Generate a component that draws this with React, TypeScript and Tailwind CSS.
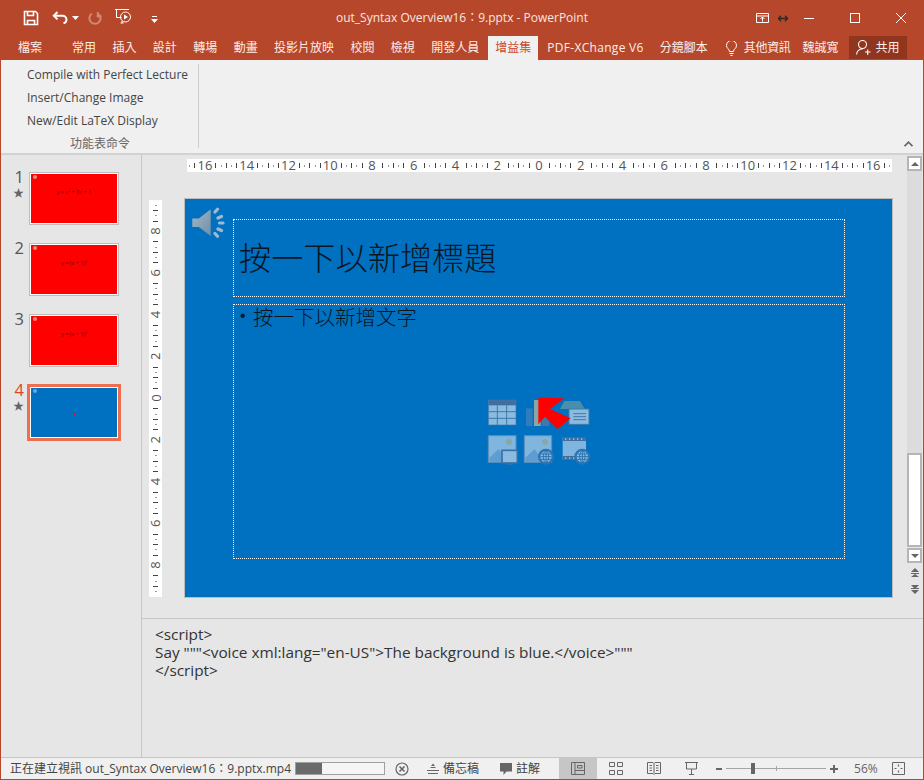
const ui = "font-['Open_Sans','Noto_Sans_CJK_TC',sans-serif]";

const tabs = ["常用", "插入", "設計", "轉場", "動畫", "投影片放映", "校閱", "檢視", "開發人員"];

function TitleIcons() {
  return (
    <div className="flex items-center">
      <svg width="16" height="16" viewBox="0 0 16 16" className="ml-[22px]" fill="none" stroke="#fff" strokeWidth="1.6">
        <path d="M1.5 1.5h11l2 2v11h-13z" />
        <path d="M4.5 1.5v4h6v-4M4.5 14.5v-4h7v4" />
      </svg>
      <svg width="17" height="14" viewBox="0 0 17 14" className="ml-[13px]" fill="none" stroke="#fff" strokeWidth="2">
        <path d="M5.5 1 1.8 4.7l3.7 3.7M2 4.7h8.5a4 4 0 0 1 4 4 4 4 0 0 1-3 3.6" />
      </svg>
      <svg width="7" height="4" viewBox="0 0 7 4" className="ml-[3px]"><path d="M0 0h7L3.5 4z" fill="#fff" /></svg>
      <svg width="15" height="15" viewBox="0 0 15 15" className="ml-[9px]" fill="none" stroke="#cf8a76" strokeWidth="2">
        <path d="M4.5 2.5a5.6 5.6 0 1 0 6 0M4.7 1v4.5H.8" transform="translate(14.5 0) scale(-1 1)" />
      </svg>
      <svg width="19" height="20" viewBox="0 0 19 20" className="ml-[11px]" fill="none" stroke="#fff" strokeWidth="1">
        <path d="M1 1.5h14M2.5 2v7.5h5M6.5 15h3M8 13v2" />
        <circle cx="11.5" cy="9" r="5" />
        <path d="m10 6.5 4 2.5-4 2.5z" fill="#fff" stroke="none" />
      </svg>
      <svg width="7" height="7" viewBox="0 0 7 7" className="ml-[18px] mt-[3px]" fill="#fff">
        <path d="M1 0h5v1H1zM0 3h7L3.500 7z" />
      </svg>
    </div>
  );
}

function WindowIcons() {
  return (
    <div className="flex items-center justify-end pr-[17px]">
      <svg width="13" height="10" viewBox="0 0 13 10" fill="none" stroke="#fff">
        <path d="M.5.500h12v9H.5zM.5 3h12M6.500 8.500V4M4.500 6l2-2 2 2" />
      </svg>
      <svg width="10" height="7" viewBox="0 0 10 7" className="ml-[9px]" fill="none" stroke="#33261f" strokeWidth="1.300">
        <path d="M0 3.500h10M3 .8.500 3.500 3 6.200M7 .8l2.500 2.700L7 6.200" />
      </svg>
      <div className="ml-[16px] h-px w-[10px] bg-white" />
      <div className="ml-[36px] h-[10px] w-[10px] border border-white" />
      <svg width="10" height="10" viewBox="0 0 10 10" className="ml-[36px]" stroke="#fff" fill="none">
        <path d="m0 0 10 10M10 0 0 10" />
      </svg>
    </div>
  );
}

function TabRow() {
  return (
    <div className="flex h-[24px] items-stretch text-[12px] leading-[24px] text-[#fbeee9]">
      <span className="ml-[17px] mr-[30px]">檔案</span>
      <div className="flex gap-[16.400px]">
        {tabs.map((t) => (
          <span key={t}>{t}</span>
        ))}
      </div>
      <span className="ml-[9px] w-[50px] bg-[#f0f0f0] text-center text-[#c8492a]">增益集</span>
      <span className="ml-[9px] tracking-[0.3px]">PDF-XChange V6</span>
      <span className="ml-[16px]">分鏡腳本</span>
      <svg width="11" height="15" viewBox="0 0 11 15" className="ml-[18px] mt-[5px]" fill="none" stroke="#fff">
        <path d="M3.500 10.500C3.500 8 .5 7.500.5 4.500a5 5 0 0 1 10 0c0 3-3 3.500-3 6zM3.500 12.500h4M4.500 14.500h2" />
      </svg>
      <span className="ml-[7px] tracking-[-0.3px]">其他資訊</span>
      <span className="ml-[12px]">魏誠寬</span>
      <div className="ml-[10px] flex h-[23px] w-[58px] items-center bg-[#90361f] pl-[7px]">
        <svg width="15" height="15" viewBox="0 0 15 15" fill="none" stroke="#fff" strokeWidth="1.100">
          <circle cx="6.500" cy="4.500" r="4" />
          <path d="M.5 14.500c.5-3.500 2.500-5.500 6-5.500M9 12h5.500M11.700 9.500v5.500" />
        </svg>
        <span className="ml-[5px]">共用</span>
      </div>
    </div>
  );
}

function Ribbon() {
  return (
    <div className="flex h-[95px] border-b-2 border-[#d2d2d2] bg-[#f0f0f0] pr-[10px] text-[#444]">
      <div className="flex w-[197px] flex-col pl-[26px] pt-[3px] text-[12px]">
        <div className="flex h-[69px] flex-col justify-between">
          <span className="leading-[23px]">Compile with Perfect Lecture</span>
          <span className="leading-[23px]">Insert/Change Image</span>
          <span className="leading-[23px]">New/Edit LaTeX Display</span>
        </div>
        <span className="ml-[43px] mt-[4px] leading-[16px] text-[#666]">功能表命令</span>
      </div>
      <div className="mt-[4px] h-[84px] w-px bg-[#cfcfcf]" />
      <div className="flex flex-1 items-end justify-end pb-[6px]">
        <svg width="9" height="6" viewBox="0 0 9 6" fill="none" stroke="#666" strokeWidth="1.700">
          <path d="m.5 5.200 4-4 4 4" />
        </svg>
      </div>
    </div>
  );
}

function Thumb({ n, star, color, label, active }: { n: number; star?: boolean; color: string; label?: string; active?: boolean }) {
  return (
    <div className="flex h-[71px] items-start">
      <div className="mt-[-2px] flex w-[24px] flex-col items-end pr-px">
        <span className={`text-[16.500px] leading-[14px] ${active ? "text-[#e0452a]" : "text-[#555]"}`}>{n}</span>
        {star && <span className="mt-[3px] text-[11px] leading-[12px] text-[#666]">★</span>}
      </div>
      <div
        className={
          active
            ? "ml-[2px] mt-[-1px] h-[57px] w-[94px] border-[3px] border-[#ee6f50] bg-white p-px"
            : "ml-[4px] h-[53px] w-[90px] border border-[#bdbdbd] bg-white p-px"
        }
      >
        <div className="relative flex h-full w-full items-start justify-center" style={{ backgroundColor: color }}>
          <div className={`absolute left-[2px] top-[1px] h-[4px] w-[4px] rounded-full ${active ? "bg-[#6fa3d0]" : "bg-[#e88a8a]"}`} />
          {label && <span className="mt-[15px] whitespace-nowrap text-[5.500px] leading-[6px] text-[#7a0000]">{label}</span>}
          {active && <div className="mt-[25px] h-[3px] w-[3px] bg-[#e8141c]" />}
        </div>
      </div>
    </div>
  );
}

function HRuler() {
  const cx = 352;
  const items = [];
  for (let i = -67; i <= 67; i++) {
    const x = cx + i * 5.22;
    const m = Math.abs(i % 8);
    if (m === 0) {
      items.push(
        <text key={i} x={x} y={11} textAnchor="middle" fontSize="13" fill="#555">
          {Math.abs(i / 4)}
        </text>,
      );
    } else if (m !== 1 && m !== 7) {
      const long = i % 2 === 0;
      items.push(<rect key={i} x={Math.round(x)} y={long ? 4 : 6} width={1} height={long ? 5 : 2} fill={long ? "#444" : "#999"} />);
    }
  }
  return (
    <svg width="705" height="13" className="block overflow-visible bg-white">
      {items}
    </svg>
  );
}

function VRuler() {
  const cy = 198;
  const items = [];
  for (let i = -37; i <= 37; i++) {
    const y = cy + i * 5.22;
    const m = Math.abs(i % 8);
    if (m === 0) {
      items.push(
        <text key={i} x={6.500} y={y} textAnchor="middle" dominantBaseline="central" fontSize="13" fill="#555" transform={`rotate(-90 6.500 ${y})`}>
          {Math.abs(i / 4)}
        </text>,
      );
    } else if (m !== 1 && m !== 7) {
      const long = i % 2 === 0;
      items.push(<rect key={i} x={long ? 4 : 6} y={Math.round(y)} width={long ? 5 : 2} height={1} fill={long ? "#444" : "#999"} />);
    }
  }
  return (
    <svg width="13" height="397" className="block overflow-visible bg-white">
      {items}
    </svg>
  );
}

function Speaker() {
  return (
    <svg width="40" height="36" viewBox="0 0 40 36" className="absolute left-[5px] top-[8px]">
      <defs>
        <linearGradient id="sp" x1="0" x2="1" y1="0" y2="1">
          <stop offset="0" stopColor="#a4b6c4" />
          <stop offset="1" stopColor="#6f8fa8" />
        </linearGradient>
      </defs>
      <path d="M2.300 11.500h6.500L20.700 2.300V29L8.800 20H2.300z" fill="url(#sp)" />
      <g stroke="#9dbad2" strokeWidth="3.200" strokeLinecap="round" fill="none">
        <path d="m25 5 2.500-2.800M28 11l3.500-1.500M29.500 16h3.500M28 22l3.500 1.500M25 26.500l2.500 2.800" />
      </g>
    </svg>
  );
}

function Globe({ cx, cy }: { cx: number; cy: number }) {
  return (
    <g>
      <circle cx={cx} cy={cy} r="24" fill="#2b73b3" />
      <circle cx={cx} cy={cy} r="17" fill="#8cbbe0" />
      <g stroke="#2b73b3" strokeWidth="3" fill="none">
        <ellipse cx={cx} cy={cy} rx="8" ry="17" />
        <path d={`M${cx - 17} ${cy}h34M${cx - 15} ${cy - 8}h30M${cx - 15} ${cy + 8}h30M${cx} ${cy - 17}v34`} />
      </g>
    </g>
  );
}

function ContentIcons() {
  return (
    <svg width="130" height="90" viewBox="0 0 390 270" className="absolute left-[285px] top-[186px]">
      {/* table */}
      <rect x="55" y="45" width="83" height="75" fill="#8cbbe0" />
      <rect x="55" y="45" width="83" height="16" fill="#3f6f9f" />
      <path d="M55 80h83M55 100h83M82 61v59M110 61v59" stroke="#3f78ad" strokeWidth="3" />
      <rect x="55" y="45" width="83" height="75" fill="none" stroke="#3f78ad" strokeWidth="2" />
      {/* chart */}
      <rect x="168" y="70" width="20" height="53" fill="#2f7dbd" />
      <rect x="192" y="45" width="20" height="78" fill="#8aa7a8" />
      <rect x="215" y="95" width="23" height="28" fill="#3f78ad" />
      {/* smartart */}
      <path d="M270 72 283 48h47l14 24z" fill="#4a8fa8" />
      <rect x="297" y="72" width="60" height="46" fill="#8cbbe0" stroke="#3f78ad" strokeWidth="3" />
      <path d="M310 86h38M310 95h38M310 104h38" stroke="#3f78ad" strokeWidth="3" />
      {/* arrow */}
      <path d="M205 38 283 40 240 72 302 100 262 133 225 95 205 118z" fill="#fe0000" />
      {/* picture + monitor */}
      <rect x="55" y="152" width="83" height="80" fill="#7fb5de" stroke="#5c8fb8" strokeWidth="3" />
      <circle cx="117" cy="171" r="9" fill="#8aa7a8" />
      <path d="M58 230v-12l28-26 25 38z" fill="#5d9dd2" />
      <rect x="96" y="196" width="46" height="38" fill="#8cbbe0" stroke="#3a6ea5" strokeWidth="5" />
      <path d="M110 238h20" stroke="#3f78ad" strokeWidth="2" />
      {/* picture + globe */}
      <rect x="163" y="152" width="82" height="80" fill="#7fb5de" stroke="#5c8fb8" strokeWidth="3" />
      <circle cx="225" cy="171" r="9" fill="#8aa7a8" />
      <path d="M166 230v-12l28-26 25 38z" fill="#5d9dd2" />
      <Globe cx={228} cy={215} />
      {/* video + globe */}
      <rect x="278" y="156" width="70" height="69" fill="#7fb5de" />
      <path d="M278 156h70v12h-70zM278 213h70v12h-70z" fill="#3f6f9f" />
      <path d="M287 160v5M299 160v5M311 160v5M323 160v5M335 160v5M287 217v5M299 217v5M311 217v5" stroke="#8cbbe0" strokeWidth="4" />
      <Globe cx={337} cy={215} />
    </svg>
  );
}

function Slide() {
  return (
    <div className="relative h-[400px] w-[709px] border border-[#bdbdbd] bg-[#0070c0] font-['Noto_Sans_CJK_TC',sans-serif] text-[#0a1622]">
      <Speaker />
      <div className="absolute left-[48px] top-[20px] flex h-[78px] w-[612px] items-center border border-dotted border-white pb-[4px] pl-[5px] text-[32.200px] font-light leading-none">
        按一下以新增標題
      </div>
      <div className="absolute left-[48px] top-[105px] flex h-[255px] w-[612px] items-start border border-dotted border-white pl-[6px] text-[20.500px] font-light leading-[22px]">
        <span className="w-[13px] font-['Liberation_Sans',sans-serif] text-[16px] font-normal">•</span>
        <span>按一下以新增文字</span>
      </div>
      <ContentIcons />
    </div>
  );
}

function ScrollBar() {
  const arrow = "flex h-[15px] w-[15px] items-center justify-center border-2 border-[#b5b5b5] bg-white";
  return (
    <div className="mt-px flex w-[15px] flex-col items-center">
      <div className={arrow}>
        <svg width="8" height="4" viewBox="0 0 8 4"><path d="M0 4 4 0l4 4z" fill="#666" /></svg>
      </div>
      <div className="h-[282px] w-full bg-[#dcdcdc]" />
      <div className="h-[94px] w-full border-2 border-[#b5b5b5] bg-white" />
      <div className={`${arrow} mt-px`}>
        <svg width="8" height="4" viewBox="0 0 8 4"><path d="M0 0h8L4 4z" fill="#666" /></svg>
      </div>
      <svg width="8" height="9" viewBox="0 0 8 9" className="mt-[5px]" fill="#666">
        <path d="M0 4 4 0l4 4zM0 5h8v1H0zM0 9l4-3 4 3z" />
      </svg>
      <svg width="8" height="9" viewBox="0 0 8 9" className="mt-[8px]" fill="#666">
        <path d="M0 0h8L4 4zM0 3h8v1H0zM0 5h8L4 9z" />
      </svg>
    </div>
  );
}

function StatusBar() {
  return (
    <div className="flex h-[22px] items-center border-t border-[#c6c6c6] bg-[#f0f0f0] pl-[9px] text-[12px] leading-none text-[#444]">
      <span className="w-[285px] whitespace-nowrap">正在建立視訊 out_Syntax Overview16：9.pptx.mp4</span>
      <div className="h-[13px] w-[90px] border border-[#a0a0a0] bg-[#f5f5f5]">
        <div className="h-full w-[26px] bg-[#6a6a6a]" />
      </div>
      <svg width="14" height="14" viewBox="0 0 14 14" className="ml-[10px]" fill="none" stroke="#666" strokeWidth="1.200">
        <circle cx="7" cy="7" r="6" />
        <path d="m4.500 4.500 5 5M9.500 4.500l-5 5" strokeWidth="1.600" />
      </svg>
      <svg width="12" height="11" viewBox="0 0 12 11" className="ml-[18px]" fill="none" stroke="#666">
        <path d="M0 7.500h12M1 10.500h10M3.500 4.500h5" />
        <path d="M4 3 6 .5 8 3z" fill="#666" stroke="none" />
      </svg>
      <span className="ml-[4px]">備忘稿</span>
      <svg width="12" height="12" viewBox="0 0 12 12" className="ml-[21px]">
        <path d="M0 0h12v8.500H6.500L3.500 12V8.500H0z" fill="#666" />
      </svg>
      <span className="ml-[4px]">註解</span>
      <div className="ml-[19px] flex h-[21px] w-[38px] items-center justify-center bg-[#c6c6c6]">
        <svg width="14" height="13" viewBox="0 0 14 13" fill="none" stroke="#666">
          <path d="M.5.500h13v12H.5zM4 .500v12M4 8.500h9.500M6.500 3.500h4.500v2.500H6.500z" />
        </svg>
      </div>
      <div className="flex w-[38px] justify-center">
        <svg width="14" height="13" viewBox="0 0 14 13" fill="none" stroke="#666">
          <path d="M.5.500h5v4h-5zM8.500.500h5v4h-5zM.5 8.500h5v4h-5zM8.500 8.500h5v4h-5z" />
        </svg>
      </div>
      <div className="flex w-[37px] justify-center">
        <svg width="14" height="13" viewBox="0 0 14 13" fill="none" stroke="#666">
          <path d="M.5.500h5.500l1 1 1-1h5.500v11H8l-1 1-1-1H.5zM7 1.500v10M2.500 3.500h2.500M2.500 6h2.500M2.500 8.500h2.500M9 3.500h2.500M9 6h2.500M9 8.500h2.500" />
        </svg>
      </div>
      <div className="flex w-[38px] justify-center">
        <svg width="13" height="13" viewBox="0 0 13 13" fill="none" stroke="#666">
          <path d="M0 .500h13M1.500 1v6h10V1M6.500 7v5.500M4 12.500h5" />
        </svg>
      </div>
      <div className="ml-[6px] h-[2px] w-[6px] bg-[#666]" />
      <div className="relative ml-[4px] h-px w-[100px] bg-[#a6a6a6]">
        <div className="absolute left-[25px] top-[-5px] h-[11px] w-[4px] bg-[#666]" />
        <div className="absolute left-[50px] top-[-2px] h-[5px] w-px bg-[#a6a6a6]" />
      </div>
      <svg width="8" height="8" viewBox="0 0 8 8" className="ml-[4px]" fill="#666">
        <path d="M3 0h2v3h3v2H5v3H3V5H0V3h3z" />
      </svg>
      <span className="ml-[16px] w-[30px] text-[#666]">56%</span>
      <svg width="13" height="13" viewBox="0 0 13 13" className="ml-[8px]" fill="none" stroke="#666">
        <path d="M.5.500h12v12H.5z" />
        <path d="M6.500 2.500v2M6.500 8.500v2M2.500 6.500h2M8.500 6.500h2" strokeWidth="1.200" />
      </svg>
    </div>
  );
}

export default function App() {
  return (
    <div className={`flex h-[780px] w-[924px] flex-col overflow-hidden border-x border-b border-[#b7472a] ${ui}`}>
      <div className="bg-[#b7472a]">
        <div className="grid h-[36px] grid-cols-[1fr_auto_1fr] items-center text-[12px] text-[#f8e6e0]">
          <TitleIcons />
          <span>out_Syntax Overview16：9.pptx - PowerPoint</span>
          <WindowIcons />
        </div>
        <TabRow />
      </div>
      <Ribbon />
      <div className="flex flex-1 bg-[#e6e6e6]">
        <div className="w-[141px] border-r border-[#c6c6c6] pt-[17px]">
          <Thumb n={1} star color="#fe0000" label="y = x² + 8x + 1" />
          <Thumb n={2} color="#fe0000" label="y = (x + 1)²" />
          <Thumb n={3} color="#fe0000" label="y = (x + 1)²" />
          <Thumb n={4} star color="#0070c0" active />
        </div>
        <div className="flex flex-1 flex-col">
          <div className="flex h-[464px] border-b border-[#c6c6c6] pr-px">
            <div className="flex-1 pl-[7px]">
              <div className="ml-[38px] mt-[4px]">
                <HRuler />
              </div>
              <div className="mt-[26px] flex items-start">
                <div className="mt-[2px]">
                  <VRuler />
                </div>
                <div className="ml-[22px]">
                  <Slide />
                </div>
              </div>
            </div>
            <ScrollBar />
          </div>
          <div className="flex-1 pl-[13px] pt-[6px] text-[15.350px] leading-[18px] text-[#333]">
            <p>&lt;script&gt;</p>
            <p>Say """&lt;voice xml:lang="en-US"&gt;The background is blue.&lt;/voice&gt;"""</p>
            <p>&lt;/script&gt;</p>
          </div>
        </div>
      </div>
      <StatusBar />
    </div>
  );
}
